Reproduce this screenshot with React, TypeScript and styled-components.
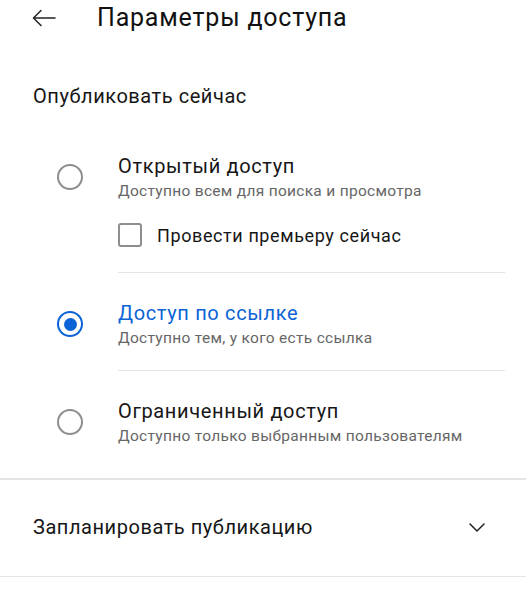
import React from "react";
import styled, { createGlobalStyle } from "styled-components";

const Global = createGlobalStyle`
  html, body { margin: 0; padding: 0; background: #ffffff; }
  body { font-family: Roboto, "Noto Sans", Arial, sans-serif; color: #141414; }
`;

const Page = styled.div`
  width: 526px;
  height: 600px;
  overflow: hidden;
  background: #fff;
`;

const Header = styled.header`
  display: flex;
  align-items: center;
  height: 36px;
  padding-left: 32px;
  gap: 41px;
`;

const BackButton = styled.button`
  border: 0;
  background: none;
  padding: 0;
  width: 24px;
  height: 24px;
  display: flex;
  align-items: center;
  justify-content: center;
  color: #222;
`;

const Title = styled.h1`
  margin: 0;
  font-size: 25px;
  letter-spacing: 0.8px;
  font-weight: 400;
  line-height: 32px;
  color: #111;
`;

const SectionHeading = styled.h2`
  margin: 0;
  padding: 48px 0 0 33px;
  font-size: 20px;
  letter-spacing: 0.55px;
  font-weight: 400;
  line-height: 24px;
  color: #161616;
`;

const OptionList = styled.div`
  display: flex;
  flex-direction: column;
  padding-top: 46px;
`;

const Option = styled.div`
  display: flex;
  align-items: flex-start;
  padding-left: 57px;
  gap: 35px;
`;

const RadioCircle = styled.span<{ $checked?: boolean }>`
  flex: none;
  width: 26px;
  height: 26px;
  box-sizing: border-box;
  border-radius: 50%;
  border: 2.5px solid ${(p) => (p.$checked ? "#0b63d6" : "#8e8e8e")};
  margin-top: 10px;
  display: flex;
  align-items: center;
  justify-content: center;
  &::after {
    content: "";
    display: ${(p) => (p.$checked ? "block" : "none")};
    width: 13px;
    height: 13px;
    border-radius: 50%;
    background: #0b63d6;
  }
`;

const OptionBody = styled.div<{ $divider?: boolean; $pad: number }>`
  flex: 1;
  margin-right: 21px;
  padding-bottom: ${(p) => (p.$divider ? `${p.$pad}px` : "0")};
  border-bottom: ${(p) => (p.$divider ? "1.5px solid #e4e4e4" : "none")};
  margin-bottom: ${(p) => (p.$divider ? "28px" : "0")};
`;

const OptionTitle = styled.div<{ $active?: boolean }>`
  font-size: 20px;
  letter-spacing: 0.65px;
  line-height: 24px;
  color: ${(p) => (p.$active ? "#0b63d6" : "#161616")};
`;

const OptionSub = styled.div`
  font-size: 15.5px;
  letter-spacing: 0.3px;
  line-height: 26px;
  color: #666;
`;

const CheckRow = styled.label`
  display: flex;
  align-items: center;
  gap: 15px;
  margin-top: 19px;
  font-size: 18px;
  letter-spacing: 0.6px;
  color: #161616;
`;

const CheckBox = styled.span`
  flex: none;
  width: 24px;
  height: 24px;
  box-sizing: border-box;
  border: 2.5px solid #8e8e8e;
  border-radius: 3px;
`;

const Spacer = styled.div`
  height: 29px;
`;

const FullDivider = styled.div`
  height: 1.5px;
  background: #e4e4e4;
`;

const ScheduleRow = styled.div`
  display: flex;
  align-items: center;
  justify-content: space-between;
  height: 96px;
  padding: 0 41px 1px 33px;
  box-sizing: border-box;
  font-size: 20px;
  letter-spacing: 0.55px;
  color: #161616;
`;

const options = [
  { title: "Открытый доступ", sub: "Доступно всем для поиска и просмотра", checked: false, extra: true, divider: true, pad: 25 },
  { title: "Доступ по ссылке", sub: "Доступно тем, у кого есть ссылка", checked: true, extra: false, divider: true, pad: 19 },
  { title: "Ограниченный доступ", sub: "Доступно только выбранным пользователям", checked: false, extra: false, divider: false, pad: 0 },
];

export default function App() {
  return (
    <Page>
      <Global />
      <Header>
        <BackButton aria-label="Назад">
          <svg width="24" height="18" viewBox="0 0 24 18" fill="none" stroke="#222" strokeWidth="1.5" strokeLinecap="round" strokeLinejoin="round">
            <path d="M23 9H2" />
            <path d="M9 1.5 1.5 9 9 16.5" />
          </svg>
        </BackButton>
        <Title>Параметры доступа</Title>
      </Header>
      <SectionHeading>Опубликовать сейчас</SectionHeading>
      <OptionList>
        {options.map((o) => (
          <Option key={o.title}>
            <RadioCircle $checked={o.checked} />
            <OptionBody $divider={o.divider} $pad={o.pad}>
              <OptionTitle $active={o.checked}>{o.title}</OptionTitle>
              <OptionSub>{o.sub}</OptionSub>
              {o.extra && (
                <CheckRow>
                  <CheckBox />
                  Провести премьеру сейчас
                </CheckRow>
              )}
            </OptionBody>
          </Option>
        ))}
      </OptionList>
      <Spacer />
      <FullDivider />
      <ScheduleRow>
        <span>Запланировать публикацию</span>
        <svg width="16" height="9" viewBox="0 0 16 9" fill="none" stroke="#222" strokeWidth="1.5" strokeLinecap="round" strokeLinejoin="round">
          <path d="M1 1l7 7 7-7" />
        </svg>
      </ScheduleRow>
      <FullDivider />
    </Page>
  );
}
